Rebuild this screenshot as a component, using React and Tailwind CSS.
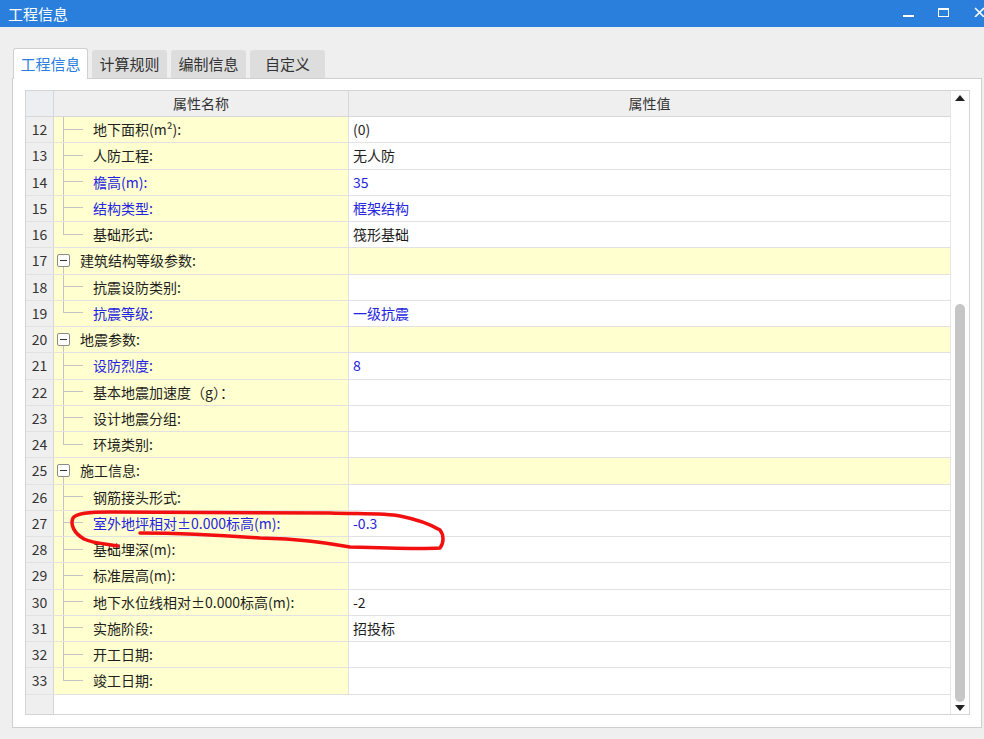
import React from 'react';

const rows = [
  { n: 12, type: 'child', name: '地下面积(m²):', value: '(0)' },
  { n: 13, type: 'child', name: '人防工程:', value: '无人防' },
  { n: 14, type: 'child', name: '檐高(m):', value: '35', blue: true },
  { n: 15, type: 'child', name: '结构类型:', value: '框架结构', blue: true },
  { n: 16, type: 'child', name: '基础形式:', value: '筏形基础', last: true },
  { n: 17, type: 'group', name: '建筑结构等级参数:' },
  { n: 18, type: 'child', name: '抗震设防类别:' },
  { n: 19, type: 'child', name: '抗震等级:', value: '一级抗震', blue: true, last: true },
  { n: 20, type: 'group', name: '地震参数:' },
  { n: 21, type: 'child', name: '设防烈度:', value: '8', blue: true },
  { n: 22, type: 'child', name: '基本地震加速度（g）：' },
  { n: 23, type: 'child', name: '设计地震分组:' },
  { n: 24, type: 'child', name: '环境类别:', last: true },
  { n: 25, type: 'group', name: '施工信息:' },
  { n: 26, type: 'child', name: '钢筋接头形式:' },
  { n: 27, type: 'child', name: '室外地坪相对±0.000标高(m):', value: '-0.3', blue: true },
  { n: 28, type: 'child', name: '基础埋深(m):' },
  { n: 29, type: 'child', name: '标准层高(m):' },
  { n: 30, type: 'child', name: '地下水位线相对±0.000标高(m):', value: '-2' },
  { n: 31, type: 'child', name: '实施阶段:', value: '招投标' },
  { n: 32, type: 'child', name: '开工日期:' },
  { n: 33, type: 'child', name: '竣工日期:', last: true },
];

const tabs = ['工程信息', '计算规则', '编制信息', '自定义'];

const Row = ({ row }) => {
  const isGroup = row.type === 'group';
  const textColor = row.blue ? 'text-[#2424e0]' : 'text-[#1e1e1e]';
  return (
    <div className="flex h-[26.25px] border-b border-[#e2e2e2]">
      <div className="w-[28px] shrink-0 bg-[#efefef] border-r border-[#d6d6d6] flex items-center justify-center text-[14px] text-[#333]">
        {row.n}
      </div>
      <div className="w-[295px] shrink-0 bg-[#ffffcf] border-r border-[#e2e2e2] flex items-stretch">
        {isGroup ? (
          <>
            <div className="ml-[3px] w-[13px] flex flex-col items-center">
              <div className="flex-1" />
              <div className="w-[13px] h-[13px] border border-[#8c8c8c] rounded-[2px] bg-white flex items-center justify-center">
                <div className="w-[7px] h-px bg-[#333]" />
              </div>
              <div className="flex-1 w-px bg-[#c4c4c4]" />
            </div>
            <div className={`ml-[10px] flex items-center text-[14px] ${textColor}`}>{row.name}</div>
          </>
        ) : (
          <>
            <div className="ml-[9px] w-[20px] flex flex-col">
              <div className="h-1/2 border-l border-b border-[#c4c4c4]" />
              <div className={`flex-1 ${row.last ? '' : 'border-l border-[#c4c4c4]'}`} />
            </div>
            <div className={`ml-[10px] flex items-center text-[14px] ${textColor}`}>{row.name}</div>
          </>
        )}
      </div>
      <div className={`flex-1 flex items-center pl-[4px] text-[14px] ${isGroup ? 'bg-[#ffffcf]' : 'bg-white'} ${textColor}`}>
        {row.value}
      </div>
    </div>
  );
};

export default function App() {
  return (
    <div
      className="relative w-[984px] h-[739px] overflow-hidden bg-[#efefef] flex flex-col"
      style={{ fontFamily: '"Noto Sans CJK SC", "Noto Sans", sans-serif' }}
    >
      {/* title bar */}
      <div className="h-[27px] shrink-0 bg-[#2b7fdc] flex items-center text-white">
        <div className="pl-[8px] text-[15px] flex-1 leading-none">工程信息</div>
        <div className="w-[11px] h-[2px] bg-white mr-[24px] mt-[4px]" />
        <div className="w-[11px] h-[9px] border border-white border-t-2 mr-[25px] mb-[3px]" />
        <svg width="10" height="10" viewBox="0 0 10 10" className="mb-[3px] shrink-0">
          <path d="M1 1 L10 10 M10 1 L1 10" stroke="white" strokeWidth="1.6" />
        </svg>
      </div>

      {/* tabs */}
      <div className="mt-[20px] ml-[13px] flex items-end h-[31px] gap-[4px]">
        {tabs.map((t, i) => (
          <div
            key={t}
            className={
              i === 0
                ? 'w-[75px] h-[31px] bg-white border border-b-0 border-[#d0d0d0] rounded-t-[3px] flex items-center justify-center text-[15px] text-[#2b7fdc] relative z-10 -mb-px'
                : 'w-[75px] h-[28px] bg-[#dddddd] rounded-t-[3px] flex items-center justify-center text-[15px] text-[#333]'
            }
          >
            {t}
          </div>
        ))}
      </div>

      {/* panel */}
      <div className="ml-[12px] w-[970px] h-[650px] bg-white border border-[#cfcfcf] pt-[11px] pl-[12px] pr-[11px] pb-[12px]">
        <div className="h-full border border-[#d4d4d4] flex">
          <div className="flex-1 flex flex-col">
            <div className="flex h-[26px] border-b border-[#d8d8d8] bg-[#efefef]">
              <div className="w-[28px] shrink-0 bg-[#eceef2] border-r border-[#d6d6d6]" />
              <div className="w-[295px] shrink-0 border-r border-[#d8d8d8] flex items-center justify-center text-[14px] text-[#333]">
                属性名称
              </div>
              <div className="flex-1 flex items-center justify-center text-[14px] text-[#333]">属性值</div>
            </div>
            {rows.map((r) => (
              <Row key={r.n} row={r} />
            ))}
            <div className="flex-1 flex">
              <div className="w-[28px] bg-[#efefef] border-r border-[#d6d6d6]" />
              <div className="flex-1 bg-white" />
            </div>
          </div>
          {/* scrollbar */}
          <div className="w-[19px] shrink-0 border-l border-[#e6e6e6] flex flex-col items-center pb-[3px]">
            <div className="mt-[4px] w-0 h-0 border-l-[5px] border-r-[5px] border-b-[6px] border-l-transparent border-r-transparent border-b-[#222]" />
            <div className="flex-1" />
            <div className="w-[10px] h-[398px] bg-[#c6c6c6] rounded-full" />
            <div className="mt-[3px] w-0 h-0 border-l-[5px] border-r-[5px] border-t-[6px] border-l-transparent border-r-transparent border-t-[#222]" />
          </div>
        </div>
      </div>

      {/* red hand-drawn annotation */}
      <svg className="absolute left-0 top-0 pointer-events-none" width="984" height="739" viewBox="0 0 984 739">
        <path
          d="M118 546 C105 544 92 543 84 539 C74 533 70 525 73 518 C76 513 88 512 110 512 L330 513 C360 514 385 513 400 516 C415 519 430 524 440 530 C444 535 444 543 440 548 C420 549 380 548 350 547 C320 542 300 539 260 538 C220 535 180 533 140 533"
          fill="none"
          stroke="#f20f0f"
          strokeWidth="3.5"
          strokeLinecap="round"
          strokeLinejoin="round"
        />
      </svg>
    </div>
  );
}
